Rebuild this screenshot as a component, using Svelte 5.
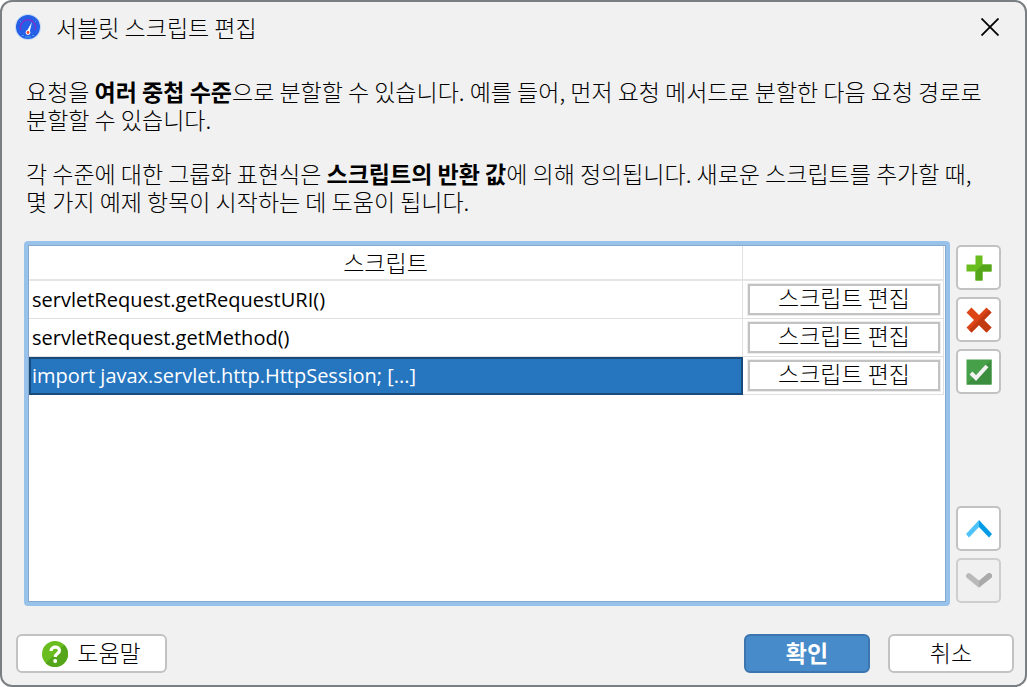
<script lang="ts">
	let scripts = $state([
		'servletRequest.getRequestURI()',
		'servletRequest.getMethod()',
		'import javax.servlet.http.HttpSession; [...]'
	]);
	let selected = $state(2);

	function add() {
		scripts.push('');
		selected = scripts.length - 1;
	}

	function remove() {
		scripts.splice(selected, 1);
		selected = Math.max(0, Math.min(selected, scripts.length - 1));
	}

	function move(step: number) {
		const target = selected + step;
		if (target < 0 || target >= scripts.length) return;
		[scripts[selected], scripts[target]] = [scripts[target], scripts[selected]];
		selected = target;
	}
</script>

<div class="dialog" role="dialog" aria-labelledby="dialog-title">
	<header class="titlebar">
		<svg class="app-icon" viewBox="0 0 26 26" aria-hidden="true">
			<circle cx="13" cy="13" r="13" fill="#c3daf3" />
			<circle cx="13" cy="13" r="12" fill="#245fe6" />
			<path d="M6 16a7.500 7.500 0 1 1 14 0" fill="none" stroke="#7a35d0" stroke-width="1.500" />
			<path d="M7 21.500h2M17 21.500h2M10 23h6M5 7l1 1M21 7l-1 1" stroke="#43a8ec" />
			<path d="M17 8l-2.500 10.500-2.800-1z" fill="#fff" />
			<circle cx="13" cy="18.500" r="2.400" fill="#fff" />
			<circle cx="13" cy="18.500" r="1.400" fill="#f0442e" />
		</svg>
		<h1 class="title" id="dialog-title">서블릿 스크립트 편집</h1>
		<button class="close" aria-label="닫기">
			<svg viewBox="0 0 18 18" aria-hidden="true">
				<path d="M0.500 0.500l17 17M17.500 0.500l-17 17" stroke="#000" stroke-width="1.800" />
			</svg>
		</button>
	</header>

	<div class="intro">
		<p>
			요청을 <b>여러 중첩 수준</b>으로 분할할 수 있습니다. 예를 들어, 먼저 요청 메서드로 분할한 다음 요청 경로로<br />분할할 수 있습니다.
		</p>
		<p>
			각 수준에 대한 그룹화 표현식은 <b>스크립트의 반환 값</b>에 의해 정의됩니다. 새로운 스크립트를 추가할 때,<br />몇 가지 예제 항목이 시작하는 데 도움이 됩니다.
		</p>
	</div>

	<div class="content">
		<div class="table-frame">
			<table>
				<thead>
					<tr>
						<th scope="col">스크립트</th>
						<th class="action-col"></th>
					</tr>
				</thead>
				<tbody>
					{#each scripts as script, i}
						<tr>
							<td class="script" class:selected={i === selected} onclick={() => (selected = i)}>{script}</td>
							<td class="action"><button class="edit">스크립트 편집</button></td>
						</tr>
					{/each}
				</tbody>
			</table>
		</div>

		<div class="tools">
			<button class="tool" aria-label="추가" onclick={add}>
				<svg viewBox="0 0 26 26" aria-hidden="true">
					<path d="M9.500 0.500h7v9h9v7h-9v9h-7v-9h-9v-7h9z" fill="#6abd1f" />
					<path d="M16.500 9.500h9v7h-9v9h-7v-9z" fill="#55a51a" />
				</svg>
			</button>
			<button class="tool" aria-label="삭제" onclick={remove}>
				<svg viewBox="0 0 26 26" aria-hidden="true">
					<path d="M5.500 0.500L13 8l7.500-7.500 5 5L18 13l7.500 7.500-5 5L13 18l-7.500 7.500-5-5L8 13 0.500 5.500z" fill="#dc4416" />
					<path d="M25.500 5.500L18 13l7.500 7.500-5 5L13 18l-7.500 7.500-2.500-2.500L23 3z" fill="#c23a12" />
				</svg>
			</button>
			<button class="tool" aria-label="확인">
				<svg viewBox="0 0 26 26" aria-hidden="true">
					<path d="M0.500 0.500h25v25h-25z" fill="#45a049" />
					<path d="M25.500 0.500v25h-25z" fill="#3a8e3e" />
					<path d="M5 14l5 5L21 7" fill="none" stroke="#f2f2f2" stroke-width="4" />
				</svg>
			</button>
			<button class="tool up" aria-label="위로" onclick={() => move(-1)}>
				<svg viewBox="0 0 26 26" aria-hidden="true">
					<path d="M13 4v7L3 21.500 0 18z" fill="#4fc3f7" />
					<path d="M13 4v7l10 10.500 3-3.500z" fill="#039be5" />
				</svg>
			</button>
			<button class="tool" aria-label="아래로" disabled={selected >= scripts.length - 1} onclick={() => move(1)}>
				<svg viewBox="0 0 28 26" aria-hidden="true">
					<path d="M3 7.500l11 9 11-9" fill="none" stroke="#b9b9b9" stroke-width="6" stroke-linecap="round" />
					<path d="M14 19.800v-6.500l9-8a3 3 0 0 1 4 4.500z" fill="#aaa" />
				</svg>
			</button>
		</div>
	</div>

	<footer class="footer">
		<button class="btn help">
			<svg viewBox="0 0 26 26" aria-hidden="true">
				<circle cx="13" cy="13" r="13" fill="#6abd1f" />
				<path d="M22.200 3.800A13 13 0 0 1 3.800 22.200z" fill="#55a51a" />
				<path d="M9 10c0-5 8.500-5 8.500-0.500 0 3-4.200 3.200-4.200 6.500" fill="none" stroke="#fff" stroke-width="3.200" />
				<circle cx="13.200" cy="20" r="2" fill="#fff" />
			</svg>
			<span>도움말</span>
		</button>
		<button class="btn primary">확인</button>
		<button class="btn">취소</button>
	</footer>
</div>

<style>
	:global(body) {
		margin: 0;
		background: #fff;
	}

	.dialog {
		--text: 23px;
		box-sizing: border-box;
		display: flex;
		flex-direction: column;
		min-height: 100vh;
		border: 2px solid #7a7f83;
		border-radius: 12px;
		background: #f1f1f1;
		color: #000;
		font-family: 'Noto Sans CJK KR', sans-serif;
		font-size: var(--text);
		font-weight: 300;
		line-height: 28px;
	}

	b {
		font-weight: 700;
	}

	button {
		box-sizing: border-box;
		padding: 0;
		border: 2px solid #c2c2c2;
		background: #fff;
		color: inherit;
		font: inherit;
	}

	svg {
		display: block;
	}

	.titlebar {
		display: flex;
		align-items: center;
		height: 49px;
		padding: 0 25px 0 13px;
	}

	.app-icon {
		width: 26px;
		height: 26px;
	}

	.title {
		flex: 1;
		margin: 0 0 0 15px;
		font-size: var(--text);
		font-weight: 300;
	}

	.close {
		padding: 1px;
		border: 0;
		background: none;
	}

	.close svg {
		width: 18px;
		height: 18px;
	}

	.intro {
		padding: 26px 24px 0;
		white-space: nowrap;
	}

	.intro p {
		margin: 0 0 26px;
	}

	.content {
		display: flex;
		flex: 1;
		gap: 6px;
		padding: 0 24px 0 22px;
	}

	.table-frame {
		flex: 1;
		border: 4px solid #98c2e9;
		border-radius: 4px;
		background: #fff;
		box-shadow: inset 0 0 0 1px #84a9cf;
	}

	table {
		width: calc(100% - 3px);
		margin: 1px 0 0 1px;
		border-spacing: 0;
		table-layout: fixed;
	}

	th,
	td {
		box-sizing: border-box;
		padding: 0;
		border-right: 1px solid #e0e0e0;
		border-bottom: 1px solid #e0e0e0;
	}

	th {
		height: 35px;
		padding-bottom: 1px;
		border-bottom: 2px solid #e6e6e6;
		font-weight: 300;
	}

	.action-col {
		width: 201px;
	}

	td {
		height: 38px;
	}

	.script {
		padding-left: 3px;
		font-family: 'Open Sans', 'Noto Sans CJK KR', sans-serif;
		font-size: 20px;
		font-weight: 400;
	}

	.selected {
		padding-left: 1px;
		border: 2px solid #184b7c;
		background: #2675bf;
		color: #fff;
	}

	.action {
		padding: 0 3px 0 5px;
	}

	.edit {
		display: block;
		width: 100%;
		height: 31px;
		padding-bottom: 4px;
		box-shadow: 0 0 0 1px #ececec;
		line-height: 23px;
	}

	.tools {
		display: flex;
		flex-direction: column;
		gap: 7px;
		padding: 4px 0 3px;
	}

	.tool {
		display: flex;
		align-items: center;
		justify-content: center;
		width: 45px;
		height: 45px;
		border-radius: 5px;
	}

	.tool svg {
		width: 26px;
		height: 26px;
	}

	.tool:disabled {
		border-color: #cecece;
		background: #f0f0f0;
	}

	.up {
		margin-top: auto;
	}

	.footer {
		display: flex;
		gap: 18px;
		padding: 28px 11px 12px 14px;
	}

	.btn {
		width: 126px;
		height: 39px;
		padding-bottom: 3px;
		border-radius: 6px;
	}

	.help {
		display: flex;
		align-items: center;
		justify-content: center;
		gap: 9px;
		width: 151px;
		margin-right: auto;
		padding-bottom: 0;
	}

	.help span {
		padding-bottom: 3px;
	}

	.help svg {
		width: 26px;
		height: 26px;
	}

	.primary {
		border-color: #3d76ae;
		background: #478bca;
		color: #fff;
		font-weight: 700;
	}
</style>
